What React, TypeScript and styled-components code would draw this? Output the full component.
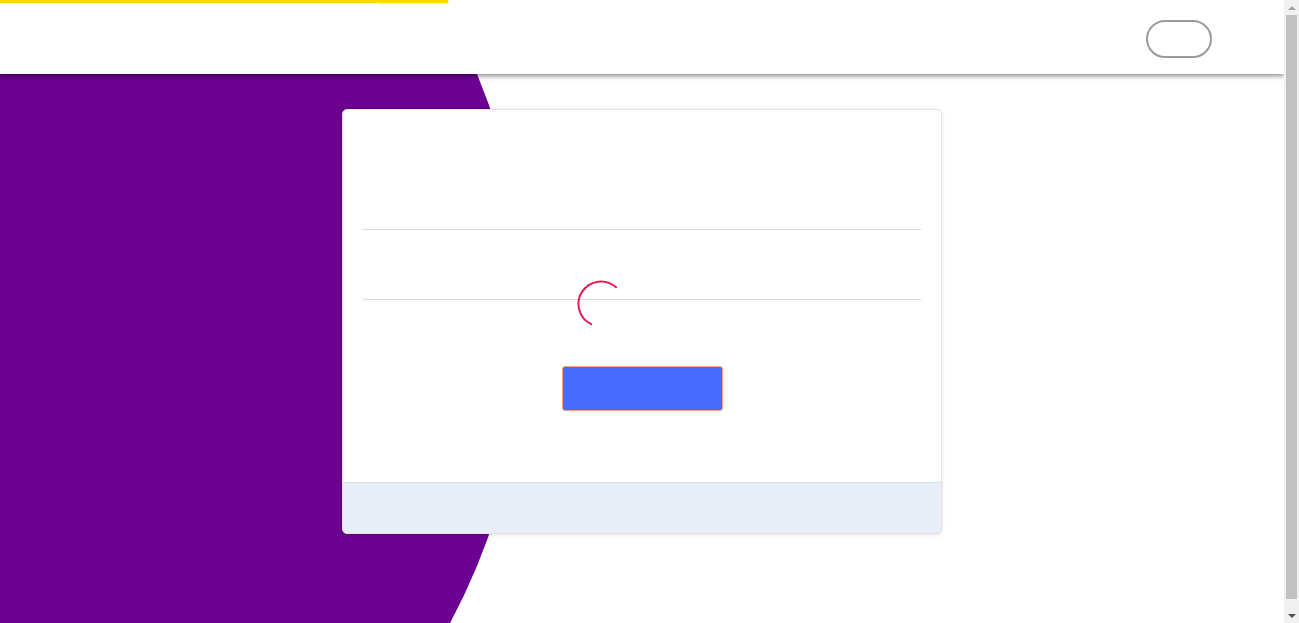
import React from "react";
import styled, { createGlobalStyle } from "styled-components";

const Global = createGlobalStyle`
  html, body { margin: 0; padding: 0; overflow: hidden; }
  body { background: #ffffff; font-family: "Liberation Sans", Arial, sans-serif; }
`;

const Frame = styled.div`
  display: flex;
  height: 100vh;
`;

const Page = styled.div`
  position: relative;
  flex: 1;
  min-width: 0;
  overflow: hidden;
`;

const ScrollTrack = styled.div`
  width: 15px;
  flex: 0 0 15px;
  background: #f1f1f1;
  display: flex;
  flex-direction: column;
  align-items: center;
`;

const ScrollArrow = styled.div<{ $dir: "up" | "down" }>`
  height: 15px;
  width: 15px;
  display: flex;
  align-items: center;
  justify-content: center;
  &::before {
    content: "";
    width: 0;
    height: 0;
    border-left: 4px solid transparent;
    border-right: 4px solid transparent;
    ${(p) =>
      p.$dir === "up"
        ? "border-bottom: 4px solid #a3a3a3;"
        : "border-top: 4px solid #505050;"}
  }
`;

const ScrollThumbArea = styled.div`
  flex: 1;
  width: 100%;
  display: flex;
  flex-direction: column;
  align-items: center;
  padding-bottom: 9px;
`;

const ScrollThumb = styled.div`
  width: 11px;
  flex: 1;
  background: #c1c1c1;
`;

const Blob = styled.div`
  position: absolute;
  left: -758px;
  top: -322px;
  width: 1284px;
  height: 1284px;
  border-radius: 50%;
  background: #6c0091;
  z-index: 0;
`;

const ProgressBar = styled.div`
  position: absolute;
  top: 0;
  left: 0;
  width: 448px;
  height: 3px;
  background: #ffd600;
  z-index: 20;
`;

const ProgressPeg = styled.div`
  position: absolute;
  right: 0;
  top: 0;
  width: 70px;
  height: 3px;
  box-shadow: 0 0 6px #d8e6a0, 0 0 3px #e8e4a0;
  opacity: 0.8;
`;

const Header = styled.header`
  position: relative;
  z-index: 10;
  height: 74px;
  box-sizing: border-box;
  padding: 4px 72px 0 0;
  background: #ffffff;
  box-shadow: 0 2px 5px rgba(0, 0, 0, 0.45);
  display: flex;
  align-items: center;
  justify-content: flex-end;
`;

const PillButton = styled.button`
  width: 66px;
  height: 38px;
  border: 2px solid #9a9a9a;
  border-radius: 19px;
  background: #ffffff;
  padding: 0;
  cursor: pointer;
`;

const Main = styled.main`
  position: relative;
  z-index: 1;
  display: flex;
  justify-content: center;
  padding-top: 35px;
`;

const Card = styled.section`
  position: relative;
  box-sizing: border-box;
  width: 600px;
  background: #ffffff;
  border: 1px solid #e2e2e2;
  border-radius: 5px;
  box-shadow: 0 1px 4px rgba(0, 0, 0, 0.12);
  overflow: hidden;
`;

const CardBody = styled.div`
  padding: 50px 20px 71px;
  display: flex;
  flex-direction: column;
`;

const Field = styled.div`
  height: 69px;
  border-bottom: 1px solid #d3dbe2;
`;

const ButtonRow = styled.div`
  display: flex;
  justify-content: center;
  margin-top: 66px;
`;

const PrimaryButton = styled.button`
  width: 161px;
  height: 45px;
  background: #476bff;
  border: 1px solid #f2a287;
  border-radius: 3px;
  padding: 0;
  cursor: pointer;
`;

const CardFooter = styled.div`
  height: 50px;
  background: #e7eef5;
  border-top: 1px solid #d6e1ec;
`;

const Spinner = styled.svg`
  position: absolute;
  left: 234px;
  top: 170px;
  width: 48px;
  height: 48px;
`;

function arcPath(cx: number, cy: number, r: number, a0: number, a1: number) {
  const rad = (d: number) => (d * Math.PI) / 180;
  const x0 = cx + r * Math.cos(rad(a0));
  const y0 = cy + r * Math.sin(rad(a0));
  const x1 = cx + r * Math.cos(rad(a1));
  const y1 = cy + r * Math.sin(rad(a1));
  const large = a1 - a0 > 180 ? 1 : 0;
  return `M ${x0} ${y0} A ${r} ${r} 0 ${large} 1 ${x1} ${y1}`;
}

export default function App() {
  return (
    <>
      <Global />
      <Frame>
        <Page>
          <Blob />
          <ProgressBar>
            <ProgressPeg />
          </ProgressBar>
          <Header>
            <PillButton aria-label="menu" />
          </Header>
          <Main>
            <Card>
              <CardBody>
                <Field />
                <Field />
                <ButtonRow>
                  <PrimaryButton aria-label="submit" />
                </ButtonRow>
              </CardBody>
              <CardFooter />
              <Spinner viewBox="0 0 48 48">
                <path
                  d={arcPath(24, 24, 22.5, 116, 312)}
                  fill="none"
                  stroke="#ea1c4c"
                  strokeWidth="2"
                  strokeLinecap="round"
                />
              </Spinner>
            </Card>
          </Main>
        </Page>
        <ScrollTrack aria-hidden="true">
          <ScrollArrow $dir="up" />
          <ScrollThumbArea>
            <ScrollThumb />
          </ScrollThumbArea>
          <ScrollArrow $dir="down" />
        </ScrollTrack>
      </Frame>
    </>
  );
}
